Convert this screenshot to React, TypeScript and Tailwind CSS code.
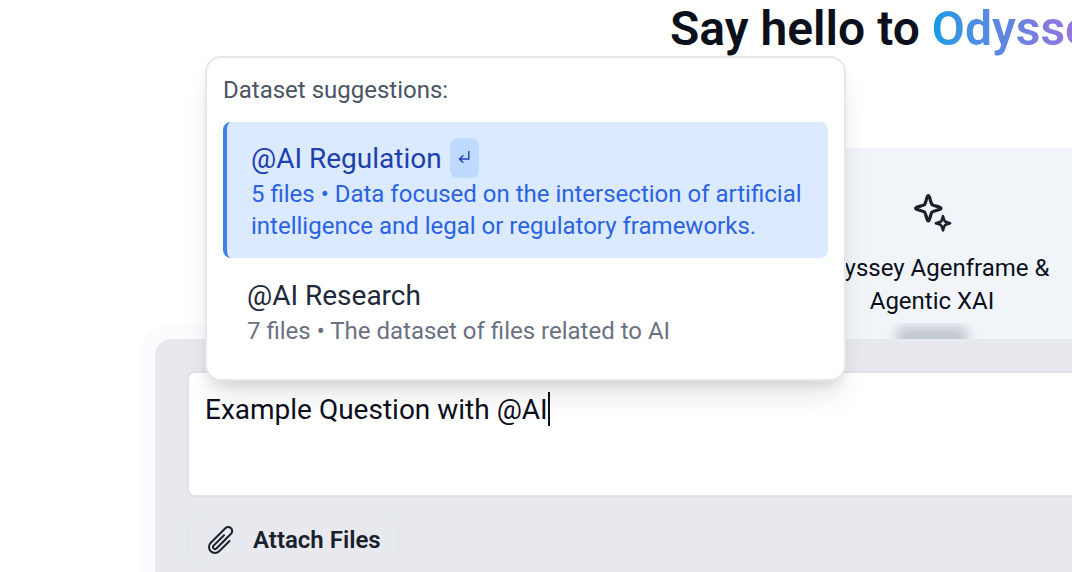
import type { SVGProps } from "react";
import { useState } from "react";

// ---- Types ----
interface Dataset {
  id: string;
  name: string;
  fileCount: number;
  description: string;
}

const DATASETS: Dataset[] = [
  {
    id: "ai-regulation",
    name: "AI Regulation",
    fileCount: 5,
    description:
      "Data focused on the intersection of artificial intelligence and legal or regulatory frameworks.",
  },
  {
    id: "ai-research",
    name: "AI Research",
    fileCount: 7,
    description: "The dataset of files related to AI",
  },
];

// ---- Icons ----
function SparklesIcon(props: SVGProps<SVGSVGElement>) {
  return (
    <svg
      viewBox="0 0 40 40"
      fill="none"
      stroke="currentColor"
      strokeLinecap="round"
      strokeLinejoin="round"
      aria-hidden="true"
      {...props}
    >
      <path
        strokeWidth="3.2"
        d="M15.6 4.2Q16.3 3 17 4.2C18.4 7 18.6 10.4 20 12.6C22.2 14 25.6 14.2 28.4 15.6Q29.6 16.3 28.4 17C25.6 18.4 22.2 18.6 20 20C18.6 22.2 18.4 25.6 17 28.4Q16.3 29.6 15.6 28.4C14.2 25.6 14 22.2 12.6 20C10.4 18.6 7 18.4 4.2 17Q3 16.3 4.2 15.6C7 14.2 10.4 14 12.6 12.6C14 10.4 14.2 7 15.6 4.2Z"
      />
      <path
        strokeWidth="2.6"
        d="M31 24.2C31.7 26.4 32 28.2 32.9 29.4C34.1 30.3 35.9 30.6 38.1 31.3C35.9 32 34.1 32.3 32.9 33.2C32 34.4 31.7 36.2 31 38.4C30.3 36.2 30 34.4 29.1 33.2C27.9 32.3 26.1 32 23.9 31.3C26.1 30.6 27.9 30.3 29.1 29.4C30 28.2 30.3 26.4 31 24.2Z"
      />
    </svg>
  );
}

function PaperClipIcon(props: SVGProps<SVGSVGElement>) {
  return (
    <svg
      viewBox="0 0 24 24"
      fill="none"
      stroke="currentColor"
      strokeWidth="1.5"
      strokeLinecap="round"
      strokeLinejoin="round"
      aria-hidden="true"
      {...props}
    >
      <path d="m18.375 12.739-7.693 7.693a4.5 4.5 0 0 1-6.364-6.364l10.94-10.94A3 3 0 1 1 19.5 7.372L8.552 18.32m.009-.01-.01.01m5.699-9.941-7.81 7.81a1.5 1.5 0 0 0 2.112 2.13" />
    </svg>
  );
}

function ReturnIcon(props: SVGProps<SVGSVGElement>) {
  return (
    <svg
      viewBox="0 0 13 16"
      fill="none"
      stroke="currentColor"
      strokeWidth="1.4"
      aria-hidden="true"
      {...props}
    >
      <path d="M10.8 1V9H1.5M5.3 5.3L1.5 9L5.3 12.7" />
    </svg>
  );
}

// ---- Suggestions ----
interface SuggestionItemProps {
  dataset: Dataset;
  active: boolean;
  onHover: () => void;
}

function SuggestionItem({ dataset, active, onHover }: SuggestionItemProps) {
  return (
    <button
      type="button"
      onMouseEnter={onHover}
      className={
        active
          ? "block w-full rounded-lg border-l-4 border-[#3f80ea] bg-blue-100 px-6 py-4 text-left"
          : "block w-full rounded-lg px-6 py-4 text-left"
      }
    >
      <span
        className={
          active
            ? "flex h-10 items-start gap-2 text-[28px] leading-[42px] text-[#1e40af]"
            : "flex h-10 items-start gap-2 text-[28px] leading-[42px] text-gray-800"
        }
      >
        @{dataset.name}
        {active && (
          <span className="flex h-10 items-center rounded-lg bg-blue-200 px-2">
            <ReturnIcon className="h-4 w-[13px]" />
          </span>
        )}
      </span>
      <span
        className={
          active
            ? "block text-2xl leading-8 text-[#2b63e3]"
            : "block text-2xl leading-8 text-gray-500"
        }
      >
        {`${dataset.fileCount} files • ${dataset.description}`}
      </span>
    </button>
  );
}

function DatasetSuggestions() {
  const [activeId, setActiveId] = useState(DATASETS[0].id);

  return (
    <div className="absolute bottom-[116px] left-[18px] z-20 w-[641px] rounded-2xl border-2 border-gray-200 bg-white p-4 shadow-[0_20px_30px_-6px_rgba(0,0,0,0.1),0_8px_12px_-4px_rgba(0,0,0,0.1)]">
      <p className="mb-4 text-2xl leading-8 text-gray-600">Dataset suggestions:</p>
      <div className="space-y-px">
        {DATASETS.map((dataset) => (
          <SuggestionItem
            key={dataset.id}
            dataset={dataset}
            active={dataset.id === activeId}
            onHover={() => setActiveId(dataset.id)}
          />
        ))}
      </div>
    </div>
  );
}

// ---- Composer ----
function Composer() {
  return (
    <form className="relative -mr-12 -mt-[37px] ml-[139px] flex-1 rounded-tl-[32px] bg-slate-100/30 pt-4 pl-4">
      <div className="h-full rounded-tl-2xl bg-[#e7e9ee] p-8 pb-2">
        <div className="relative">
          <textarea
            aria-label="Question"
            defaultValue="Example Question with @AI"
            className="block h-[126px] w-full resize-none rounded-lg border-2 border-[#e0e2e7] bg-white p-4 text-[28px] leading-[42px] text-[#0b101c] caret-transparent outline-none"
          />
          {/* Text cursor */}
          <span
            aria-hidden="true"
            className="absolute top-[21px] left-[361px] h-[34px] w-0.5 bg-[#0b101c]"
          />
          <DatasetSuggestions />
        </div>
        <button
          type="button"
          className="mt-[19px] flex h-12 items-center gap-4 rounded-xl border-2 border-[#e2e7ed] px-4 text-2xl font-semibold text-[#1a202c]"
        >
          <PaperClipIcon className="size-8" />
          Attach Files
        </button>
      </div>
    </form>
  );
}

export default function App() {
  return (
    <div className="flex min-h-screen flex-col overflow-hidden bg-white font-[Roboto,sans-serif]">
      <h1 className="ml-[670px] whitespace-nowrap text-5xl leading-[58px] font-semibold text-[#0b101c]">
        Say hello to{" "}
        <span className="bg-linear-to-r from-[#0a9ae6] via-[#6583e0] via-45% to-[#b068dc] bg-clip-text text-transparent">
          Odyssey
        </span>
      </h1>
      <article className="-mr-8 mt-[90px] ml-[792px] flex h-[212px] flex-col items-center bg-slate-100 pt-11 pr-8">
        <SparklesIcon className="size-10 text-[#1a202c]" />
        <p className="mt-5 whitespace-nowrap text-center text-2xl leading-[33px] text-[#0b101c]">
          Odyssey Agenframe &
          <br />
          Agentic XAI
        </p>
        {/* Content fading under the composer */}
        <div className="mt-[5px] flex h-6 w-full shrink-0 justify-center overflow-hidden">
          <div className="mt-1 h-5 w-[70px] rounded bg-gray-500/50 blur-[6px]" />
        </div>
      </article>
      <Composer />
    </div>
  );
}
